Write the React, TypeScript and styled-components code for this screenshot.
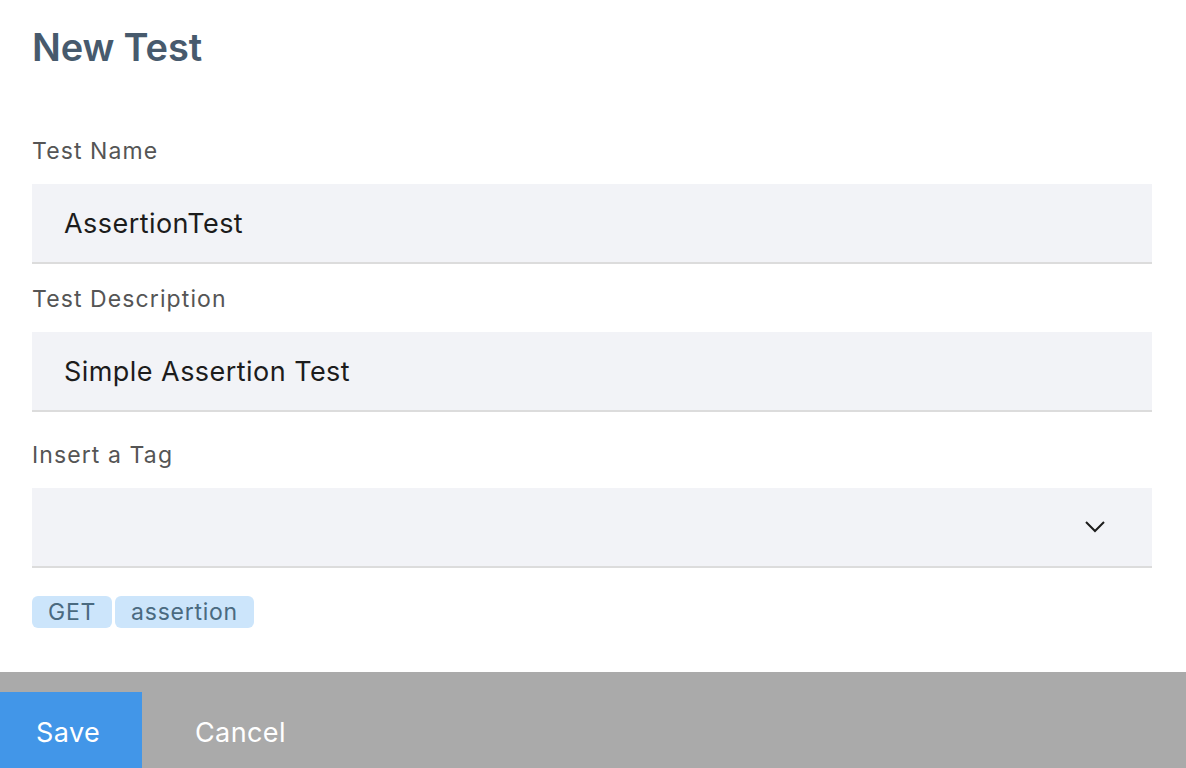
import React from "react";
import styled, { createGlobalStyle } from "styled-components";

const Global = createGlobalStyle`
  html, body { margin: 0; padding: 0; background: #ffffff; }
  body { font-family: Inter, "Noto Sans", sans-serif; }
  * { box-sizing: border-box; }
`;

const Page = styled.div`
  width: 1186px;
  height: 768px;
  display: flex;
  flex-direction: column;
  overflow: hidden;
`;

const Content = styled.div`
  flex: 1;
  padding: 24px 34px 0 32px;
  display: flex;
  flex-direction: column;
`;

const Title = styled.h1`
  margin: 0;
  font-size: 38px;
  line-height: 46px;
  font-weight: 600;
  color: #475a6d;
  letter-spacing: -0.15px;
`;

const Field = styled.div<{ $top: number }>`
  display: flex;
  flex-direction: column;
  margin-top: ${(p) => p.$top}px;
`;

const Label = styled.label`
  font-size: 23px;
  line-height: 28px;
  color: #555555;
  letter-spacing: 1.1px;
  margin-bottom: 19px;
`;

const InputBox = styled.div`
  height: 80px;
  background: #f2f3f7;
  border-bottom: 2px solid #dcdcdc;
  display: flex;
  align-items: center;
  padding: 0 32px;
  font-size: 27px;
  color: #1c1c1c;
  letter-spacing: 0.45px;
`;

const SelectBox = styled(InputBox)`
  justify-content: flex-end;
  padding-right: 46px;
`;

const Tags = styled.div`
  display: flex;
  gap: 3px;
  margin-top: 28px;
`;

const Tag = styled.span`
  height: 32px;
  padding: 0 16px;
  border-radius: 6px;
  background: #cce5fb;
  color: #4a6a80;
  font-size: 23px;
  display: flex;
  align-items: center;
  letter-spacing: 0.75px;
`;

const Footer = styled.div`
  height: 96px;
  background: #aaaaaa;
  display: flex;
  align-items: flex-end;
`;

const Button = styled.button<{ $primary?: boolean }>`
  height: 76px;
  width: ${(p) => (p.$primary ? "142px" : "auto")};
  border: none;
  background: ${(p) => (p.$primary ? "#4296e8" : "transparent")};
  color: #ffffff;
  font-family: Inter, "Noto Sans", sans-serif;
  font-size: 27px;
  letter-spacing: 0.4px;
  padding: ${(p) => (p.$primary ? "4px 0 0 36px" : "4px 0 0 53px")};
  text-align: left;
  cursor: pointer;
`;

const Chevron = () => (
  <svg width="22" height="14" viewBox="0 0 22 14" fill="none">
    <path d="M2 2 L11 11 L20 2" stroke="#1c1c1c" strokeWidth="2" />
  </svg>
);

export default function App() {
  return (
    <Page>
      <Global />
      <Content>
        <Title>New Test</Title>
        <Field $top={67}>
          <Label>Test Name</Label>
          <InputBox>AssertionTest</InputBox>
        </Field>
        <Field $top={21}>
          <Label>Test Description</Label>
          <InputBox>Simple Assertion Test</InputBox>
        </Field>
        <Field $top={29}>
          <Label>Insert a Tag</Label>
          <SelectBox>
            <Chevron />
          </SelectBox>
        </Field>
        <Tags>
          <Tag>GET</Tag>
          <Tag>assertion</Tag>
        </Tags>
      </Content>
      <Footer>
        <Button $primary>Save</Button>
        <Button>Cancel</Button>
      </Footer>
    </Page>
  );
}
